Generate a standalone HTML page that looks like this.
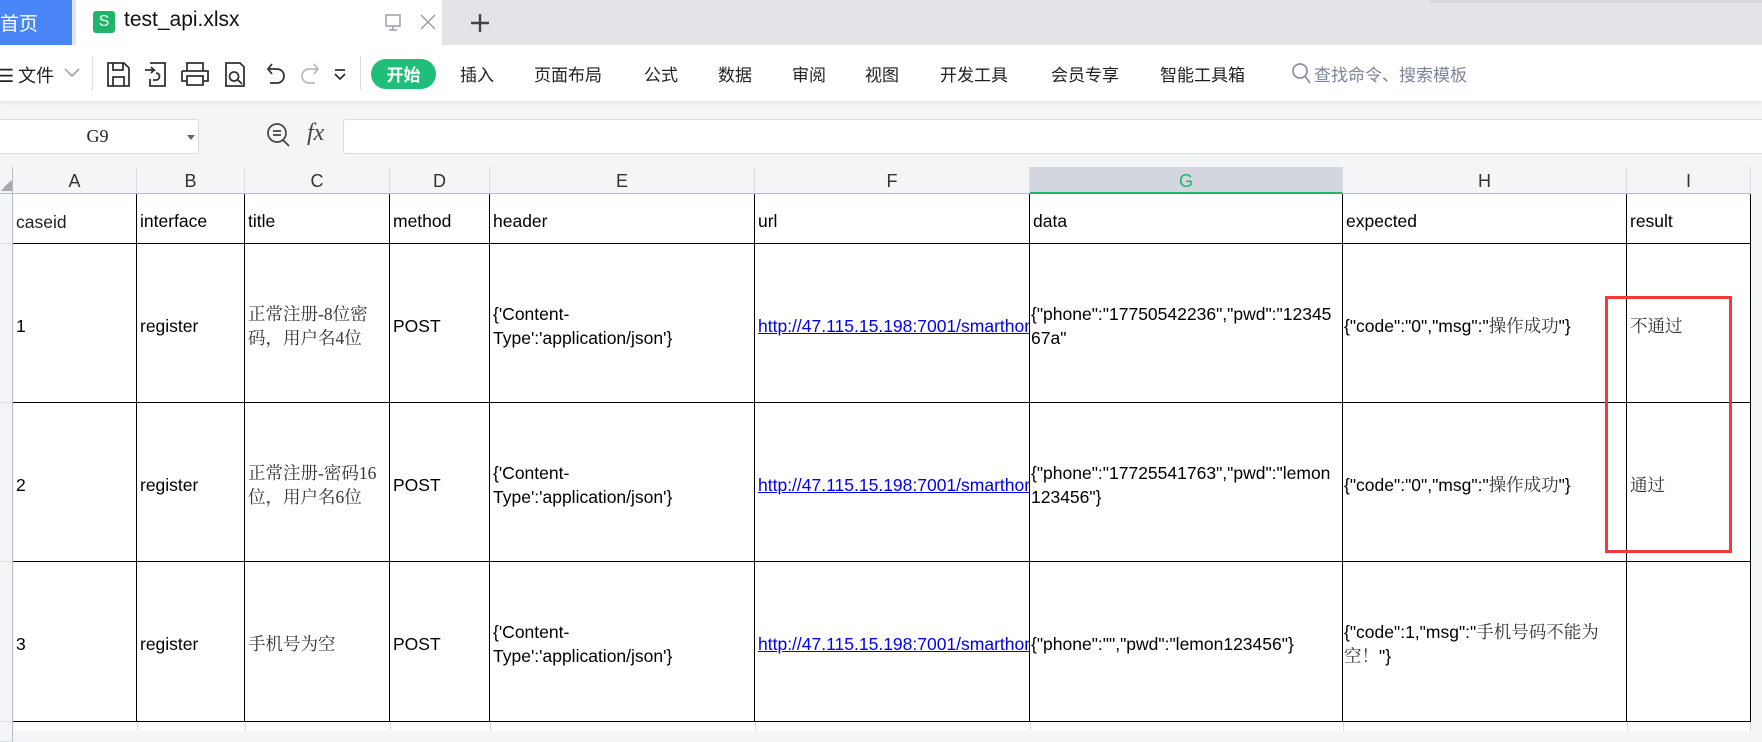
<!DOCTYPE html>
<html><head><meta charset="utf-8"><style>
*{margin:0;padding:0;box-sizing:border-box}
body{width:1762px;height:731px;overflow:hidden;background:#f4f5f7;font-family:"Liberation Sans","Noto Sans CJK SC",sans-serif;position:relative}
.a{position:absolute}
.tabbar{left:0;top:0;width:1762px;height:45px;background:#e3e4e8}
.tb{left:0;top:45px;width:1762px;height:56px;background:#fff;box-shadow:0 2px 3px rgba(0,0,0,.06)}
.mi{top:61px;font-size:17px;color:#222;font-family:"Noto Sans CJK SC",sans-serif}
.ch{top:167px;height:27px;font-size:18px;color:#333;text-align:center;line-height:29px;border-right:1px solid #d9dce3;border-bottom:1px solid #b7bccb;background:#f4f5f7}
.c{font-size:17.5px;color:#000;display:flex;align-items:center;padding-left:3px;padding-top:5px;line-height:24px;overflow:hidden;white-space:nowrap;background:#fff;border-right:1px solid #000;border-bottom:1px solid #000}
.cn{font-family:"Liberation Serif","Noto Serif CJK SC",serif;color:#333}
.u{color:#0000ee;text-decoration:underline}
.rh{left:0;width:13px;background:#f4f5f7;border-right:1px solid #b7bccb;border-bottom:1px solid #d9dce3}
</style></head><body>
<div class="a tabbar"></div>
<div class="a" style="left:0;top:0;width:72px;height:45px;background:#4a86f7;color:#fff;font-size:19px;line-height:45px;font-family:'Noto Sans CJK SC',sans-serif">首页</div>
<div class="a" style="left:76px;top:0;width:366px;height:45px;background:#fff"></div>
<div class="a" style="left:93px;top:11px;width:22px;height:22px;background:#1fb56b;border-radius:3px;color:#fff;font-size:16px;text-align:center;line-height:22px">S</div>
<div class="a" style="left:124px;top:8px;font-size:21px;color:#111">test_api.xlsx</div>
<svg class="a" style="left:385px;top:12px" width="56" height="22" viewBox="0 0 56 22" fill="none" stroke="#9aa0ab" stroke-width="1.5"><rect x="1" y="3" width="14" height="11"/><path d="M8 14v4M4 18h8"/><path d="M36 3l14 14M50 3L36 17"/></svg>
<svg class="a" style="left:469px;top:12px" width="22" height="22" stroke="#444" stroke-width="2.4"><path d="M11 2v18M2 11h18"/></svg>
<div class="a" style="left:1430px;top:0;width:332px;height:3px;background:#ccc;opacity:.5"></div>
<div class="a tb"></div>
<div class="a mi" style="left:-2px;top:62px;font-size:18px">☰ 文件</div>
<svg class="a" style="left:64px;top:68px" width="16" height="10" fill="none" stroke="#999" stroke-width="1.5"><path d="M1 1l7 7 7-7"/></svg>
<div class="a" style="left:92px;top:56px;width:1px;height:34px;background:#ddd"></div>
<div class="a" style="left:360px;top:56px;width:1px;height:34px;background:#ddd"></div>
<svg class="a" style="left:106px;top:60px" width="240" height="28" fill="none" stroke="#333" stroke-width="1.8">
<path d="M2 3h16l5 5v18H2z M7 3v7h10V3 M7 26v-9h11v9"/>
<path d="M44 3h15v23H44v-7 M39 10h9l-3-3 M48 10l-3 3 M50 13a3.5 3.5 0 0 1 0 7h-3"/>
<path d="M81 11V3h16v8 M76 11h26v10h-5 M81 21h-5V11 M81 16h16v9H81z"/>
<path d="M120 3h14l4 4v19h-18z M128 12a4.5 4.5 0 1 0 .1 0 M131 19l5 5"/>
<path d="M162 9h9a7 7 0 0 1 0 14h-7 M166 4l-4 5 4 5"/>
<path stroke="#bbb" d="M212 9h-9a7 7 0 0 0 0 14h6 M208 4l4 5-4 5"/>
<path d="M229 10h10 M229 14l5 5 5-5"/>
</svg>
<div class="a" style="left:371px;top:59px;width:65px;height:30px;border-radius:15px;background:#1fbf7a;color:#fff;font-size:17px;font-weight:bold;text-align:center;line-height:30px;font-family:'Noto Sans CJK SC',sans-serif">开始</div>
<div class="a mi" style="left:460px">插入</div>
<div class="a mi" style="left:534px">页面布局</div>
<div class="a mi" style="left:644px">公式</div>
<div class="a mi" style="left:718px">数据</div>
<div class="a mi" style="left:792px">审阅</div>
<div class="a mi" style="left:865px">视图</div>
<div class="a mi" style="left:940px">开发工具</div>
<div class="a mi" style="left:1051px">会员专享</div>
<div class="a mi" style="left:1160px">智能工具箱</div>
<svg class="a" style="left:1291px;top:62px" width="22" height="24" fill="none" stroke="#8a93a6" stroke-width="1.8"><circle cx="9" cy="9" r="7"/><path d="M14 14l5 7"/></svg>
<div class="a mi" style="left:1314px;color:#7c8597">查找命令、搜索模板</div>
<!-- formula bar -->
<div class="a" style="left:-4px;top:119px;width:203px;height:35px;background:#fff;border:1px solid #d8dbe1;border-radius:3px;font-size:18px;line-height:33px;text-align:center;font-family:'Liberation Serif',serif;color:#222">G9</div>
<div class="a" style="left:187px;top:135px;border:4px solid transparent;border-top:5px solid #666"></div>
<svg class="a" style="left:265px;top:121px" width="30" height="30" fill="none" stroke="#444" stroke-width="1.7"><circle cx="12" cy="12" r="9"/><path d="M8 10h8M8 14h8M18 19l6 6"/></svg>
<div class="a" style="left:307px;top:120px;font-family:'Liberation Serif',serif;font-style:italic;font-size:24px;color:#444">fx</div>
<div class="a" style="left:343px;top:119px;width:1430px;height:35px;background:#fff;border:1px solid #d8dbe1;border-radius:3px"></div>
<!-- col headers -->
<div class="a" style="left:0;top:167px;width:13px;height:27px;border-right:1px solid #b7bccb;border-bottom:1px solid #b7bccb"></div>
<div class="a" style="left:1px;top:180px;border:5px solid transparent;border-right:6px solid #aaa;border-bottom:6px solid #aaa;width:0"></div>
<div class="a ch" style="left:13px;width:124px">A</div>
<div class="a ch" style="left:137px;width:108px">B</div>
<div class="a ch" style="left:245px;width:145px">C</div>
<div class="a ch" style="left:390px;width:100px">D</div>
<div class="a ch" style="left:490px;width:265px">E</div>
<div class="a ch" style="left:755px;width:275px">F</div>
<div class="a ch" style="left:1030px;width:313px;background:#d3d6de;color:#1fb56b;border-bottom:2px solid #1fb56b">G</div>
<div class="a ch" style="left:1343px;width:284px">H</div>
<div class="a ch" style="left:1627px;width:124px">I</div>
<!-- row headers -->
<div class="a rh" style="top:194px;height:50px"></div>
<div class="a rh" style="top:244px;height:159px"></div>
<div class="a rh" style="top:403px;height:159px"></div>
<div class="a rh" style="top:562px;height:160px"></div>
<div class="a rh" style="top:722px;height:20px"></div>
<!-- row 1 -->
<div class="a c" style="left:13px;top:194px;width:124px;height:50px;color:#222;padding-top:7px">caseid</div>
<div class="a c" style="left:137px;top:194px;width:108px;height:50px">interface</div>
<div class="a c" style="left:245px;top:194px;width:145px;height:50px">title</div>
<div class="a c" style="left:390px;top:194px;width:100px;height:50px">method</div>
<div class="a c" style="left:490px;top:194px;width:265px;height:50px">header</div>
<div class="a c" style="left:755px;top:194px;width:275px;height:50px">url</div>
<div class="a c" style="left:1030px;top:194px;width:313px;height:50px">data</div>
<div class="a c" style="left:1343px;top:194px;width:284px;height:50px">expected</div>
<div class="a c" style="left:1627px;top:194px;width:124px;height:50px">result</div>
<!-- row 2 -->
<div class="a c" style="left:13px;top:244px;width:124px;height:159px">1</div>
<div class="a c" style="left:137px;top:244px;width:108px;height:159px">register</div>
<div class="a c cn" style="left:245px;top:244px;width:145px;height:159px;white-space:normal">正常注册-8位密码，用户名4位</div>
<div class="a c" style="left:390px;top:244px;width:100px;height:159px">POST</div>
<div class="a c" style="left:490px;top:244px;width:265px;height:159px"><div>{'Content-<br>Type':'application/json'}</div></div>
<div class="a c" style="left:755px;top:244px;width:275px;height:159px"><span class="u">http://47.115.15.198:7001/smarthome/user/register</span></div>
<div class="a c" style="left:1030px;top:244px;width:313px;height:159px;padding-left:1px"><div>{"phone":"17750542236","pwd":"12345<br>67a"</div></div>
<div class="a c" style="left:1343px;top:244px;width:284px;height:159px;padding-left:1px"><div>{"code":"0","msg":"<span class="cn">操作成功</span>"}</div></div>
<div class="a c cn" style="left:1627px;top:244px;width:124px;height:159px">不通过</div>
<!-- row 3 -->
<div class="a c" style="left:13px;top:403px;width:124px;height:159px">2</div>
<div class="a c" style="left:137px;top:403px;width:108px;height:159px">register</div>
<div class="a c cn" style="left:245px;top:403px;width:145px;height:159px;white-space:normal">正常注册-密码16位，用户名6位</div>
<div class="a c" style="left:390px;top:403px;width:100px;height:159px">POST</div>
<div class="a c" style="left:490px;top:403px;width:265px;height:159px"><div>{'Content-<br>Type':'application/json'}</div></div>
<div class="a c" style="left:755px;top:403px;width:275px;height:159px"><span class="u">http://47.115.15.198:7001/smarthome/user/register</span></div>
<div class="a c" style="left:1030px;top:403px;width:313px;height:159px;padding-left:1px"><div>{"phone":"17725541763","pwd":"lemon<br>123456"}</div></div>
<div class="a c" style="left:1343px;top:403px;width:284px;height:159px;padding-left:1px"><div>{"code":"0","msg":"<span class="cn">操作成功</span>"}</div></div>
<div class="a c cn" style="left:1627px;top:403px;width:124px;height:159px">通过</div>
<!-- row 4 -->
<div class="a c" style="left:13px;top:562px;width:124px;height:160px">3</div>
<div class="a c" style="left:137px;top:562px;width:108px;height:160px">register</div>
<div class="a c cn" style="left:245px;top:562px;width:145px;height:160px">手机号为空</div>
<div class="a c" style="left:390px;top:562px;width:100px;height:160px">POST</div>
<div class="a c" style="left:490px;top:562px;width:265px;height:160px"><div>{'Content-<br>Type':'application/json'}</div></div>
<div class="a c" style="left:755px;top:562px;width:275px;height:160px"><span class="u">http://47.115.15.198:7001/smarthome/user/register</span></div>
<div class="a c" style="left:1030px;top:562px;width:313px;height:160px;padding-left:1px">{"phone":"","pwd":"lemon123456"}</div>
<div class="a c" style="left:1343px;top:562px;width:284px;height:160px;padding-left:1px"><div>{"code":1,"msg":"<span class="cn">手机号码不能为</span><br><span class="cn">空！</span>"}</div></div>
<div class="a c" style="left:1627px;top:562px;width:124px;height:160px"></div>
<!-- row 5 -->
<div class="a" style="left:13px;top:722px;width:1738px;height:9px;background:#fff"></div>
<div class="a" style="left:137px;top:722px;width:1px;height:9px;background:#d9dce3;box-shadow:108px 0 #d9dce3,253px 0 #d9dce3,353px 0 #d9dce3,618px 0 #d9dce3,893px 0 #d9dce3,1206px 0 #d9dce3,1490px 0 #d9dce3,1613px 0 #d9dce3"></div>
<!-- red box -->
<div class="a" style="left:1605px;top:296px;width:127px;height:257px;border:3px solid #f23a3a"></div>
</body></html>
